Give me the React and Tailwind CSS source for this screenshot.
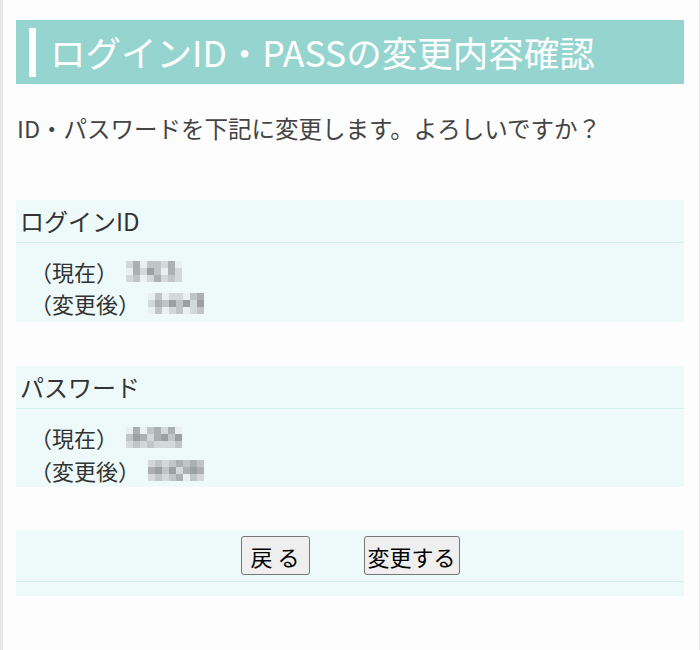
import React from 'react';

const font = { fontFamily: '"Noto Sans CJK JP", "Noto Sans", sans-serif' };

// pixelated stand-in for the masked values
const Mosaic = ({ cells, cols, size = 7 }) => (
  <span
    className="inline-grid align-middle"
    style={{ gridTemplateColumns: `repeat(${cols}, ${size}px)`, gridAutoRows: `${size}px` }}
  >
    {cells.map((c, i) => (
      <span key={i} style={{ background: c }} />
    ))}
  </span>
);

const g = ['#e8f0f0', '#d3d9d9', '#c0c5c5', '#abb1b1', '#9ba1a1'];
const pick = (s) => s.split('').map((d) => g[Number(d)]);

const values = {
  idNow: pick('13022130' + '03142031' + '12013121'),
  idNew: pick('02011023' + '13242414' + '02012012'),
  pwNow: pick('03023130' + '24313424' + '12121112'),
  pwNew: pick('12123232' + '34241343' + '12123021'),
};

function Section({ title, rows, pb }) {
  return (
    <div className="bg-[#eefafa]">
      <div className="h-[43px] flex items-center pl-[4px] border-b border-[#d3f1ef] text-[#333] text-[24px]">{title}</div>
      <div className={`pt-[12px] pl-[14px] text-[#333] text-[22px] ${pb}`}>
        {rows.map((r, i) => (
          <div key={i} className={`flex items-center leading-[32px] ${r.h}`}>
            <span>{r.label}</span>
            <span className="ml-[8px] flex">
              <Mosaic cells={r.cells} cols={8} size={7} />
            </span>
          </div>
        ))}
      </div>
    </div>
  );
}

export default function App() {
  return (
    <div className="min-h-[650px] bg-[#fdfdfd] border-l-[3px] border-r border-[#e6e6e6]" style={font}>
      <div className="pl-[13px] pr-[15px] pt-[20px] pb-[52px]">
        <div className="h-[64px] bg-[#96d5cf] flex items-center">
          <div className="ml-[13px] w-[7px] h-[49px] bg-white" />
          <h1 className="ml-[14px] text-white text-[35.5px] leading-none">ログインID・PASSの変更内容確認</h1>
        </div>

        <p className="mt-[29px] text-[#444] text-[23.5px] leading-[30px] pl-[1px]">
          ID・パスワードを下記に変更します。よろしいですか？
        </p>

        <div className="mt-[57px]">
          <Section
            title="ログインID"
            pb="pb-[3px]"
            rows={[
              { label: '（現在）', cells: values.idNow, h: 'h-[32px]' },
              { label: '（変更後）', cells: values.idNew, h: 'h-[32px]' },
            ]}
          />
        </div>

        <div className="mt-[44px]">
          <Section
            title="パスワード"
            pb="pb-0"
            rows={[
              { label: '（現在）', cells: values.pwNow, h: 'h-[32px]' },
              { label: '（変更後）', cells: values.pwNew, h: 'h-[34px]' },
            ]}
          />
        </div>

        <div className="mt-[43px] bg-[#eefafa]">
          <div className="h-[52px] flex items-center justify-center gap-[54px] border-b border-[#d3f1ef]">
            <button className="w-[69px] h-[39px] bg-[#efefef] border border-[#767676] rounded-[3px] text-black text-[22px] leading-none">
              戻 る
            </button>
            <button className="w-[96px] h-[39px] bg-[#efefef] border border-[#767676] rounded-[3px] text-black text-[22px] leading-none">
              変更する
            </button>
          </div>
          <div className="h-[14px]" />
        </div>
      </div>
    </div>
  );
}
